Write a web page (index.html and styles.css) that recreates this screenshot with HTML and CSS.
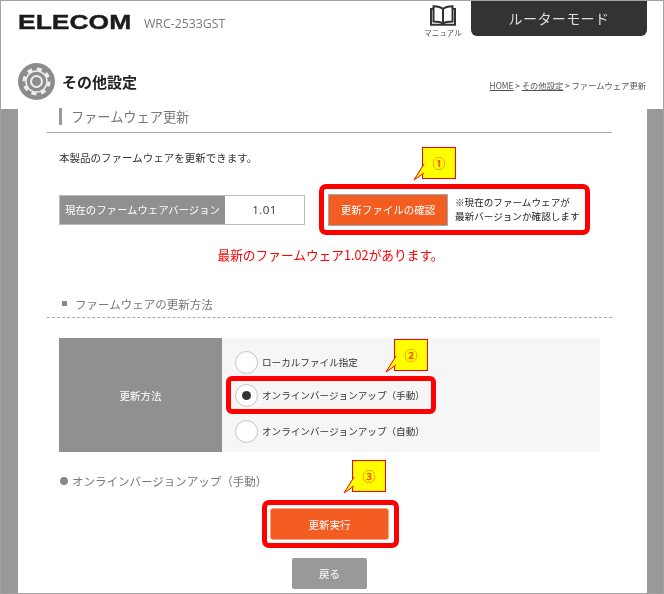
FILE: index.html
```html
<!DOCTYPE html>
<html lang="ja">
<head>
<meta charset="utf-8">
<title>ファームウェア更新</title>
<link rel="stylesheet" href="styles.css">
</head>
<body>
<div class="page">
  <header class="header">
    <div class="logo"><span class="logo-text">ELECOM</span></div>
    <div class="model">WRC-2533GST</div>
    <div class="manual">
      <svg class="book" width="26" height="21" viewBox="0 0 26 21"><path d="M13 4C11 2 7 1.200 3.500 1.200V16.500C7 16.500 11 17 13 18.500C15 17 19 16.500 22.500 16.500V1.200C19 1.200 15 2 13 4ZM13 4V18.500M3.500 4H1V19.800H25V4H22.500" fill="none" stroke="#333" stroke-width="2"/></svg>
      <span class="manual-label">マニュアル</span>
    </div>
    <div class="mode">ルーターモード</div>
  </header>
  <div class="titlebar">
    <svg class="gear" width="37" height="37" viewBox="0 0 37 37">
      <circle cx="18.500" cy="18.500" r="18.500" fill="#8c8c8c"/>
      <circle cx="18.500" cy="18.500" r="12.500" fill="none" stroke="#eee" stroke-width="3" stroke-dasharray="5 4.820"/>
      <circle cx="18.500" cy="18.500" r="10.500" fill="none" stroke="#eee" stroke-width="1.500"/>
      <circle cx="18.500" cy="18.500" r="5.500" fill="none" stroke="#eee" stroke-width="2"/>
    </svg>
    <h1 class="page-title">その他設定</h1>
    <nav class="crumbs"><span class="crumb-link">HOME</span> &gt; <span class="crumb-link">その他設定</span> &gt; ファームウェア更新</nav>
  </div>
  <main class="main">
    <div class="panel">
      <h2 class="section-title"><span class="section-text">ファームウェア更新</span></h2>
      <p class="intro">本製品のファームウェアを更新できます。</p>
      <div class="version-row">
        <div class="version">
          <div class="version-label">現在のファームウェアバージョン</div>
          <div class="version-value">1.01</div>
        </div>
        <div class="mark mark-check">
          <button class="btn btn-check" type="button">更新ファイルの確認</button>
          <p class="note">※現在のファームウェアが<br>最新バージョンか確認します</p>
          <div class="callout callout-1">①<svg class="tail" width="11" height="17" viewBox="0 0 11 17"><path d="M11 0L1 16L11 9" fill="#ff0" stroke="#f00" stroke-width="1"/></svg></div>
        </div>
      </div>
      <p class="alert">最新のファームウェア1.02があります。</p>
      <h3 class="sub-title"><span class="square"></span>ファームウェアの更新方法</h3>
      <div class="method">
        <div class="method-label">更新方法</div>
        <div class="method-options">
          <div class="option"><span class="radio"></span>ローカルファイル指定</div>
          <div class="option option-marked">
            <span class="radio"><span class="radio-dot"></span></span>オンラインバージョンアップ（手動）
            <div class="callout callout-2">②<svg class="tail" width="11" height="17" viewBox="0 0 11 17"><path d="M11 0L1 16L11 9" fill="#ff0" stroke="#f00" stroke-width="1"/></svg></div>
          </div>
          <div class="option"><span class="radio"></span>オンラインバージョンアップ（自動）</div>
        </div>
      </div>
      <div class="online-title"><span class="bullet"></span>オンラインバージョンアップ（手動）</div>
      <div class="mark mark-run">
        <button class="btn btn-run" type="button">更新実行</button>
        <div class="callout callout-3">③<svg class="tail" width="11" height="17" viewBox="0 0 11 17"><path d="M11 0L1 16L11 9" fill="#ff0" stroke="#f00" stroke-width="1"/></svg></div>
      </div>
      <button class="btn-back" type="button">戻る</button>
    </div>
  </main>
</div>
</body>
</html>
```

FILE: styles.css
```css
* { box-sizing: border-box; }
html, body { margin: 0; padding: 0; }
body { width: 664px; height: 594px; overflow: hidden; background: #fff; font-family: "Noto Sans CJK JP", "Noto Sans", sans-serif; color: #333; }
p, h1, h2, h3 { margin: 0; font-weight: normal; }
.page { width: 664px; height: 594px; border: 1px solid #a3a3a3; display: flex; flex-direction: column; overflow: hidden; background: #fff; filter: blur(.3px); }
.header { display: flex; height: 44px; flex: none; }
.logo { margin: 9px 0 0 17px; width: 113px; height: 24px; overflow: visible; }
.logo-text { display: inline-block; font: bold 21px/24px "Liberation Sans", sans-serif; color: #1b1b1b; transform: scaleX(1.26); transform-origin: left center; -webkit-text-stroke: .4px #1b1b1b; }
.model { margin: 15px 0 0 13px; font: 12.300px/16px "Open Sans", sans-serif; color: #777; width: 276px; }
.manual { width: 46px; display: flex; flex-direction: column; align-items: center; padding-top: 4px; }
.book { display: block; }
.manual-label { font-size: 7.500px; line-height: 11px; color: #555; margin-top: 1px; white-space: nowrap; }
.mode { margin-left: 5px; width: 176px; height: 36px; margin-top: -1px; background: #333; color: #ddd; border-radius: 0 0 6px 6px; font-size: 14px; line-height: 36px; text-align: center; letter-spacing: .4px; }
.titlebar { display: flex; align-items: center; height: 64px; flex: none; padding: 0 17px; }
.gear { flex: none; margin-top: 8px; }
.page-title { margin-left: 7px; font-size: 15px; font-weight: bold; color: #222; margin-top: 8px; }
.crumbs { margin-left: auto; font-size: 8.300px; color: #555; margin-top: 16px; white-space: nowrap; }
.crumb-link { text-decoration: underline; }
.main { flex: 1; background: #999; padding: 0 16px 0 17px; min-height: 0; }
.panel { height: 500px; margin-top: -9px; background: #fff; position: relative; padding-top: 8px; }
.section-title { margin-left: 29px; width: 565px; height: 25px; border-bottom: 1px solid #aaa; padding-left: 12px; font-size: 13.200px; }
.section-text { display: block; height: 17px; line-height: 17px; border-left: 3px solid #999; padding-left: 9px; color: #777; }
.intro { margin: 17px 0 0 41px; font-size: 10.500px; line-height: 16px; color: #333; }
.version-row { display: flex; align-items: center; margin: 18px 0 0 41px; height: 51px; }
.version { display: flex; width: 246px; height: 30px; border: 1px solid #bbb; }
.version-label { width: 165px; background: #909090; color: #fff; font-size: 10.400px; line-height: 28px; padding-left: 5px; white-space: nowrap; }
.version-value { flex: 1; text-align: center; font: 11.500px/28px "Open Sans", sans-serif; color: #333; letter-spacing: .5px; }
.mark { position: relative; border: 5px solid #f00; border-radius: 7px; display: flex; align-items: center; background: #fff; }
.mark-check { margin-left: 14px; width: 271px; height: 51px; padding-left: 4px; }
.btn { border: 1px solid #9ab; background: #f45d22; color: #fff; font: 10.500px "Noto Sans CJK JP", sans-serif; padding: 0; }
.btn-check { width: 120px; height: 32px; }
.note { margin-left: 7px; font-size: 9.600px; line-height: 13.500px; color: #222; white-space: nowrap; }
.callout { position: absolute; width: 34px; height: 32px; background: #ff0; border: 1px solid #f00; color: #f50; font-size: 13px; font-weight: bold; line-height: 30px; text-align: center; }
.tail { position: absolute; left: -10px; top: 16px; overflow: visible; }
.callout-1 { left: 98px; top: -42px; }
.alert { margin: 11px 0 0; width: 625px; text-align: center; font-size: 12.700px; line-height: 18px; color: #f00; }
.sub-title { margin: 31px 0 0 29px; width: 565px; height: 23px; padding: 0 0 0 15px; text-indent: 13px; font-size: 11.500px; line-height: 18px; color: #777; border-bottom: 1px dashed #aaa; position: relative; }
.square { position: absolute; left: 15px; top: 6px; width: 5px; height: 5px; background: #888; }
.method { display: flex; margin: 20px 0 0 41px; width: 541px; height: 114px; background: #f6f6f6; }
.method-label { width: 163px; background: #909090; color: #fff; font-size: 10.500px; display: flex; align-items: center; justify-content: center; }
.method-options { flex: 1; padding: 10px 0 0 4px; }
.option { position: relative; display: flex; align-items: center; width: 210px; height: 34px; font-size: 9.600px; color: #333; white-space: nowrap; padding-left: 9px; }
.option:first-child { height: 28px; }
.option-marked { height: 38px; border: 5px solid #f00; border-radius: 6px; padding-left: 4px; }
.radio { flex: none; width: 23px; height: 23px; border-radius: 50%; border: 1.500px solid #c4c4c4; background: #fff; margin-right: 4px; display: flex; align-items: center; justify-content: center; }
.radio-dot { width: 9px; height: 9px; border-radius: 50%; background: #333; }
.callout-2 { left: 163px; top: -42px; }
.online-title { margin: 20px 0 0 42px; font-size: 11.500px; line-height: 18px; color: #777; display: flex; align-items: center; }
.bullet { width: 8px; height: 8px; border-radius: 50%; background: #888; margin-right: 4px; }
.mark-run { margin: 10px 0 0 244px; width: 137px; height: 48px; padding-left: 3px; }
.btn-run { width: 119px; height: 32px; border: 1px solid #f8a080; border-radius: 3px; }
.callout-3 { left: 85px; top: -45px; }
.btn-back { display: block; margin: 10px 0 0 274px; width: 75px; height: 31px; border: 0; border-radius: 2px; background: #999; color: #fff; font: 10.500px "Noto Sans CJK JP", sans-serif; padding: 0; }
```
